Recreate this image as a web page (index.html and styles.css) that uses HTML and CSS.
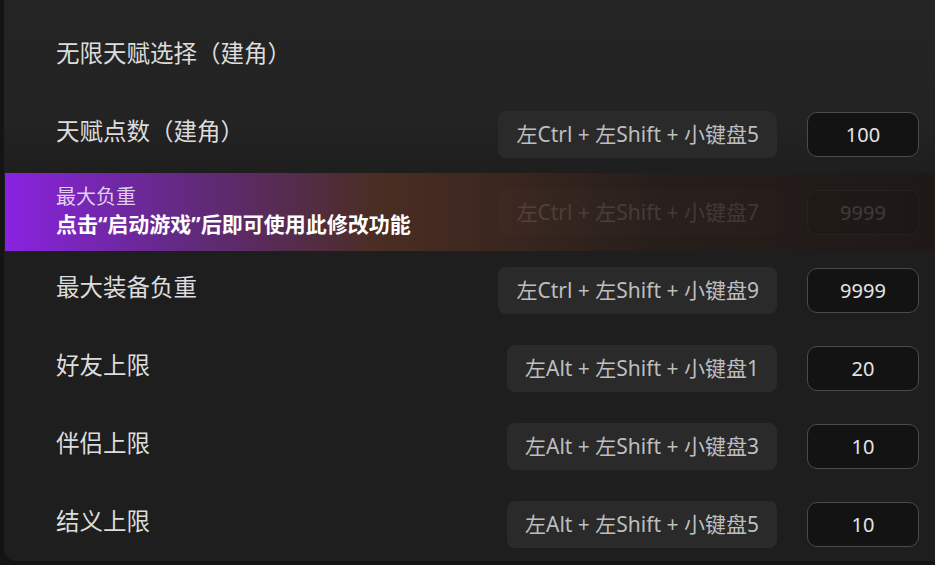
FILE: index.html
```html
<!DOCTYPE html>
<html lang="zh-CN">
<head>
  <meta charset="UTF-8">
  <title>修改功能</title>
  <link rel="stylesheet" href="styles.css">
</head>
<body>
  <div class="panel">
    <div class="row">
      <span class="label">无限天赋选择（建角）</span>
    </div>
    <div class="row">
      <span class="label">天赋点数（建角）</span>
      <span class="keys">左Ctrl + 左Shift + 小键盘5</span>
      <span class="value">100</span>
    </div>
    <div class="row locked">
      <span class="label"></span>
      <span class="keys">左Ctrl + 左Shift + 小键盘7</span>
      <span class="value">9999</span>
      <div class="lock-tip">
        <div class="tip-title">最大负重</div>
        <div class="tip-text">点击“启动游戏”后即可使用此修改功能</div>
      </div>
    </div>
    <div class="row">
      <span class="label">最大装备负重</span>
      <span class="keys">左Ctrl + 左Shift + 小键盘9</span>
      <span class="value">9999</span>
    </div>
    <div class="row">
      <span class="label">好友上限</span>
      <span class="keys">左Alt + 左Shift + 小键盘1</span>
      <span class="value">20</span>
    </div>
    <div class="row">
      <span class="label">伴侣上限</span>
      <span class="keys">左Alt + 左Shift + 小键盘3</span>
      <span class="value">10</span>
    </div>
    <div class="row">
      <span class="label">结义上限</span>
      <span class="keys">左Alt + 左Shift + 小键盘5</span>
      <span class="value">10</span>
    </div>
  </div>
</body>
</html>
```

FILE: styles.css
```css
body {
  margin: 0;
  background-color: #141414;
  font-family: "Noto Sans", "Noto Sans CJK SC", sans-serif;
  overflow: hidden;
}
.panel {
  margin-left: 4px;
  height: 561px;
  padding-top: 17px;
  box-sizing: border-box;
  border-radius: 0 0 0 12px;
  background: linear-gradient(to bottom, #242424 0, #232323 120px, #1e1e1e 175px);
  overflow: hidden;
}
.row {
  position: relative;
  height: 78px;
  display: flex;
  align-items: center;
  padding: 0 16px 0 52px;
}
.label {
  flex: 1;
  padding-bottom: 8px;
  color: #dcdcdc;
  font-size: 23.5px;
}
.keys {
  height: 47px;
  line-height: 47px;
  padding: 0 18px;
  background-color: #2a2a2a;
  border-radius: 8px;
  color: #bebebe;
  font-size: 21px;
}
.value {
  width: 110px;
  height: 43px;
  line-height: 43px;
  margin-left: 30px;
  background-color: #131313;
  border: 1px solid #4b4b4b;
  border-radius: 10px;
  text-align: center;
  color: #e4e4e4;
  font-size: 20px;
}
.lock-tip {
  position: absolute;
  top: 0;
  left: 1px;
  right: 0;
  bottom: 0;
  padding: 0 0 2px 51px;
  display: flex;
  flex-direction: column;
  justify-content: center;
  background: linear-gradient(to right,
    rgba(138, 34, 226, 1) 0,
    rgba(104, 42, 140, 0.95) 18%,
    rgba(82, 48, 36, 0.85) 40%,
    rgba(40, 30, 26, 0.82) 70%,
    rgba(30, 24, 22, 0.85) 100%);
}
.tip-title {
  color: rgba(255, 255, 255, 0.78);
  font-size: 20px;
  line-height: 26px;
}
.tip-text {
  color: #ffffff;
  font-size: 21px;
  font-weight: bold;
  line-height: 28px;
}
```
